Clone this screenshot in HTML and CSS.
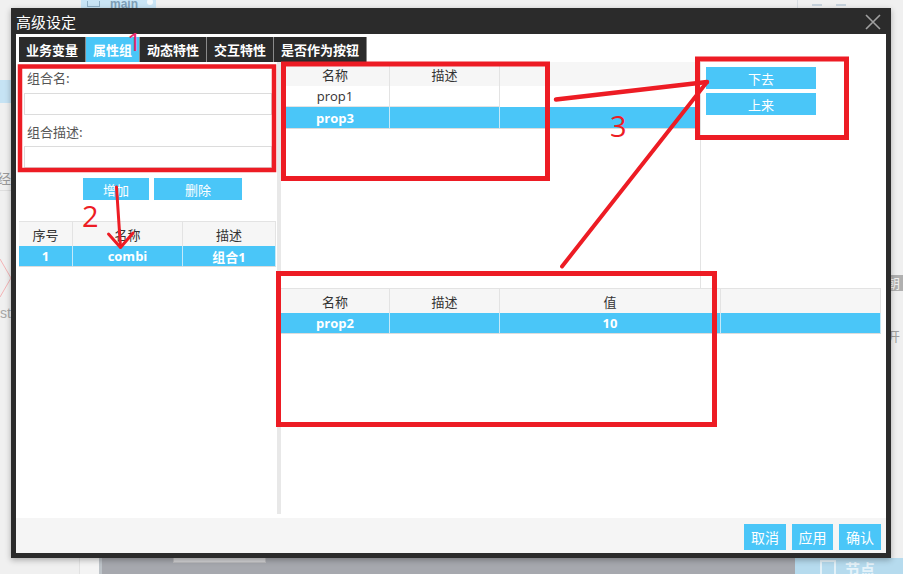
FILE: index.html
```html
<!DOCTYPE html>
<html>
<head>
<meta charset="utf-8">
<title>高级设定</title>
<link rel="stylesheet" href="styles.css">
</head>
<body>
<div class="app">
  <div class="app-top">
    <div class="main-tab"><span class="main-ico"></span><span class="main-txt">main</span><span class="main-dot"></span></div>
    <div class="top-tools"><span class="tool-line"></span><span class="tool-dash"></span><span class="tool-dash"></span></div>
  </div>
  <div class="app-left">
    <div class="sel-blue"></div>
    <div class="frag-char">经</div>
    <div class="frag-line"></div>
    <svg class="frag-diamond" width="11" height="44" viewBox="0 0 11 44"><path d="M0 2 L11 21 L0 40" fill="none" stroke="#f3b3b5" stroke-width="1"/></svg>
    <div class="frag-st">st</div>
  </div>
  <div class="app-center"></div>
  <div class="app-right">
    <div class="frag-gray">朝</div>
    <div class="frag-open">开</div>
  </div>
  <div class="app-bottom">
    <div class="bot-a"></div>
    <div class="bot-b"></div>
    <div class="bot-c"><div class="bot-c-rect"></div></div>
    <div class="bot-d"><span class="bot-ico"></span><span class="bot-txt">节点</span></div>
  </div>
</div>

<div class="dialog">
  <div class="dlg-title">
    <span class="title">高级设定</span>
    <svg class="close" width="16" height="16" viewBox="0 0 16 16"><path d="M1 1 L15 15 M15 1 L1 15" stroke="#a0a0a0" stroke-width="1.6" fill="none"/></svg>
  </div>
  <div class="dlg-body">
    <div class="tabs">
      <div class="tab w67">业务变量</div>
      <div class="tab active w54">属性组</div>
      <div class="tab w67">动态特性</div>
      <div class="tab w67">交互特性</div>
      <div class="tab w93">是否作为按钮</div>
    </div>
    <div class="content">
      <div class="left">
        <div class="lbl">组合名:</div>
        <input class="inp" type="text">
        <div class="lbl lbl2">组合描述:</div>
        <input class="inp inp2" type="text">
        <div class="btnrow">
          <div class="btn b-add">增加</div>
          <div class="btn b-del">删除</div>
        </div>
        <div class="tbl tbl-left">
          <div class="th">序号</div><div class="th">名称</div><div class="th">描述</div>
          <div class="td sel">1</div><div class="td sel">combi</div><div class="td sel">组合1</div>
        </div>
      </div>
      <div class="divider"></div>
      <div class="right">
        <div class="right-top">
          <div class="mid">
            <div class="tbl tbl-mid">
              <div class="th">名称</div><div class="th">描述</div><div class="th last"></div>
              <div class="td">prop1</div><div class="td"></div><div class="td last"></div>
              <div class="td sel tall">prop3</div><div class="td sel tall"></div><div class="td sel tall last"></div>
            </div>
          </div>
          <div class="side">
            <div class="btn b-side">下去</div>
            <div class="btn b-side">上来</div>
          </div>
        </div>
        <div class="tbl tbl-bot">
          <div class="th">名称</div><div class="th">描述</div><div class="th">值</div><div class="th"></div>
          <div class="td sel">prop2</div><div class="td sel"></div><div class="td sel">10</div><div class="td sel"></div>
        </div>
      </div>
    </div>
    <div class="footer">
      <div class="btn fb w42">取消</div>
      <div class="btn fb w41">应用</div>
      <div class="btn fb w42">确认</div>
    </div>
  </div>
</div>

<svg class="annot" width="903" height="574" viewBox="0 0 903 574">
  <g fill="none" stroke="#ed1c24" stroke-linecap="round" stroke-linejoin="round">
    <rect x="20" y="66.5" width="254" height="103.5" stroke-width="4.5" stroke-linecap="butt" stroke-linejoin="miter"/>
    <rect x="283.5" y="64" width="264" height="114.5" stroke-width="5" stroke-linecap="butt" stroke-linejoin="miter"/>
    <rect x="697.5" y="59" width="149" height="78.5" stroke-width="5" stroke-linecap="butt" stroke-linejoin="miter"/>
    <rect x="278.5" y="273.5" width="436" height="151" stroke-width="5" stroke-linecap="butt" stroke-linejoin="miter"/>
    <path d="M116.5 187 L120.5 247" stroke-width="3"/>
    <path d="M108.5 234 L120.5 247.5 L133 233" stroke-width="3"/>
    <path d="M556 99.5 L707 82" stroke-width="4.5"/>
    <path d="M562 266.5 L707 82" stroke-width="4"/>
  </g>
  <text class="ann ann2" x="82" y="227">2</text>
  <text class="ann ann3" x="610" y="137">3</text>
  <text class="ann ann1" x="127" y="51">1</text>
</svg>
</body>
</html>
```

FILE: styles.css
```css
* { box-sizing: border-box; }
html, body { margin: 0; padding: 0; }
body {
  width: 903px;
  height: 574px;
  overflow: hidden;
  position: relative;
  background: #f0f0f0;
  font-family: "Open Sans", "Noto Sans CJK SC", sans-serif;
}

/* ---------- background application ---------- */
.app {
  width: 903px;
  height: 574px;
  display: grid;
  grid-template-columns: 11px 880px 12px;
  grid-template-rows: 8px 550px 16px;
}
.app-top {
  grid-column: 1 / 4;
  grid-row: 1;
  display: flex;
  overflow: hidden;
}
.main-tab {
  margin-left: 81px;
  width: 75px;
  height: 8px;
  background: #c9e5f6;
  display: flex;
  align-items: flex-end;
  overflow: hidden;
}
.main-ico {
  width: 13px;
  height: 6px;
  margin: 0 0 1px 6px;
  border: 1px solid #8fb1c8;
  border-top: none;
}
.main-txt {
  margin-left: 10px;
  font-family: "Liberation Sans", sans-serif;
  font-size: 12px;
  line-height: 8px;
  height: 8px;
  color: #7e9fb7;
  font-weight: bold;
}
.main-dot {
  width: 6px;
  height: 6px;
  border-radius: 50%;
  background: #f4f9fc;
  margin: 0 0 3px 9px;
}
.top-tools {
  margin-left: 641px;
  display: flex;
  gap: 14px;
  align-items: flex-start;
}
.tool-line { width: 1px; height: 8px; background: #d8dde2; }
.tool-dash { width: 10px; height: 2px; margin-top: 4px; background: #c8d4de; }

.app-left {
  grid-column: 1;
  grid-row: 2;
  display: flex;
  flex-direction: column;
  overflow: hidden;
}
.sel-blue { margin-top: 72px; height: 23px; background: #c6e3f4; }
.frag-char {
  margin-top: 66px;
  margin-left: -3px;
  font-family: "Noto Sans CJK SC", sans-serif;
  font-size: 14px;
  line-height: 18px;
  color: #9a9a9a;
}
.frag-line { margin-top: 3px; height: 1px; background: #dedede; }
.frag-diamond { margin-top: 66px; display: block; }
.frag-st {
  margin-top: 4px;
  font-family: "Liberation Sans", sans-serif;
  font-size: 14px;
  line-height: 16px;
  color: #a8a8a8;
}
.app-center { grid-column: 2; grid-row: 2; }
.app-right {
  grid-column: 3;
  grid-row: 2;
  display: flex;
  flex-direction: column;
  overflow: hidden;
}
.frag-gray {
  margin-top: 267px;
  height: 16px;
  background: #b0b0b0;
  color: #f2f2f2;
  font-family: "Noto Sans CJK SC", sans-serif;
  font-size: 13px;
  line-height: 16px;
  padding-left: 0;
  text-indent: -4px;
}
.frag-open {
  margin-top: 37px;
  color: #a0a0a0;
  font-family: "Noto Sans CJK SC", sans-serif;
  font-size: 13px;
  line-height: 16px;
  text-indent: -4px;
}
.app-bottom {
  grid-column: 1 / 4;
  grid-row: 3;
  display: flex;
}
.bot-a { width: 80px; background: #f0f0f0; border-right: 1px solid #e2e2e2; }
.bot-b { width: 19px; background: #f4f4f4; }
.bot-c {
  width: 696px;
  background: #a6a8ae;
  border-left: 3px solid #bdc3c8;
}
.bot-c-rect {
  margin-left: 71px;
  width: 93px;
  height: 5px;
  background: #d3d3d5;
  border: 1px solid #bcbcbe;
  border-top: none;
}
.bot-d {
  width: 108px;
  background: #b6dbee;
  display: flex;
  align-items: flex-start;
}
.bot-ico {
  margin: 2px 0 0 25px;
  width: 16px;
  height: 14px;
  border: 2px solid #e3f1f8;
  border-bottom: none;
}
.bot-txt {
  margin-left: 9px;
  font-family: "Noto Sans CJK SC", sans-serif;
  font-size: 15px;
  line-height: 16px;
  padding-top: 3px;
  color: #e6f3fa;
  font-weight: bold;
}

/* ---------- dialog ---------- */
.dialog {
  position: absolute;
  left: 11px;
  top: 8px;
  width: 880px;
  height: 550px;
  background: #2b2b2b;
  padding: 0 5px 5px 5px;
  display: flex;
  flex-direction: column;
  box-shadow: 0 2px 6px rgba(0, 0, 0, 0.3);
}
.dlg-title {
  height: 26px;
  display: flex;
  align-items: center;
  justify-content: space-between;
}
.title {
  color: #ffffff;
  font-family: "Noto Sans CJK SC", sans-serif;
  font-size: 15px;
  line-height: 26px;
  padding-top: 1px;
}
.close { display: block; margin-right: 5px; margin-top: 1px; }
.dlg-body {
  flex: 1;
  background: #ffffff;
  display: flex;
  flex-direction: column;
}
.tabs {
  height: 28px;
  padding: 3px 0 0 3px;
  display: flex;
}
.tab {
  height: 25px;
  background: #2b2b2b;
  color: #ffffff;
  font-family: "Noto Sans CJK SC", sans-serif;
  font-size: 13px;
  font-weight: bold;
  display: flex;
  align-items: center;
  justify-content: center;
  border-right: 1px solid #8a8a8a;
}
.tab.active { background: #4ac6f8; }
.w67 { width: 67px; }
.w54 { width: 54px; }
.w93 { width: 93px; }

.content {
  height: 452px;
  display: flex;
}
.left {
  width: 261px;
  display: flex;
  flex-direction: column;
}
.lbl {
  margin: 7px 0 0 11px;
  font-family: "Noto Sans CJK SC", sans-serif;
  font-size: 13px;
  line-height: 18px;
  color: #555555;
}
.lbl2 { margin-top: 8px; }
.inp {
  display: block;
  margin: 6px 0 0 8px;
  width: 248px;
  height: 22px;
  padding: 0;
  border: 1px solid #dcdcdc;
  background: #ffffff;
  outline: none;
}
.inp2 { margin-top: 5px; }
.btnrow {
  margin: 10px 0 0 67px;
  display: flex;
  gap: 5px;
}
.btn {
  background: #4ac6f8;
  color: #ffffff;
  font-family: "Noto Sans CJK SC", sans-serif;
  font-size: 13px;
  display: flex;
  align-items: center;
  justify-content: center;
}
.b-add { width: 66px; height: 22px; }
.b-del { width: 88px; height: 22px; }

.tbl {
  display: grid;
  font-size: 13px;
}
.th {
  height: 25px;
  background: #f6f6f6;
  border-top: 1px solid #e3e3e3;
  border-right: 1px solid #e3e3e3;
  color: #333333;
  display: flex;
  align-items: center;
  justify-content: center;
  font-family: "Noto Sans CJK SC", sans-serif;
}
.td {
  height: 21px;
  color: #333333;
  display: flex;
  align-items: center;
  justify-content: center;
  border-right: 1px solid #e3e3e3;
  border-bottom: 1px solid #e3e3e3;
}
.td.sel {
  background: #4ac6f8;
  color: #ffffff;
  font-weight: bold;
  border-right: 1px solid #c4e9f9;
  border-bottom: 1px solid #dcdcdc;
}
.tbl-left {
  margin: 21px 0 0 3px;
  width: 257px;
  grid-template-columns: 54px 110px 93px;
}
.tbl-left .th { height: 25px; }

.divider { width: 4px; background: #e8e8e8; }
.right {
  width: 604px;
  display: flex;
  flex-direction: column;
}
.right-top {
  height: 226px;
  display: flex;
}
.mid { width: 419px; }
.tbl-mid {
  grid-template-columns: 109px 110px 200px;
}
.tbl-mid .th { height: 24px; border-top: none; }
.tbl-mid .th.last, .tbl-mid .td.last { border-right: none; }
.tbl-mid .td:not(.sel).last { border-bottom: none; }
.tbl-mid .td.tall { height: 22px; }
.side {
  width: 185px;
  border-left: 1px solid #e3e3e3;
  padding: 5px 0 0 5px;
  display: flex;
  flex-direction: column;
  gap: 4px;
}
.b-side { width: 110px; height: 22px; }
.tbl-bot {
  width: 600px;
  grid-template-columns: 109px 110px 221px 160px;
}
.tbl-bot .th:last-child { border-right: none; }

.footer {
  margin-top: 4px;
  height: 35px;
  background: #f5f5f5;
  display: flex;
  justify-content: flex-end;
  align-items: flex-start;
  gap: 6px;
  padding: 6px 5px 0 0;
}
.fb { height: 26px; font-size: 14px; }
.w42 { width: 42px; }
.w41 { width: 41px; }

/* ---------- annotations ---------- */
.annot {
  position: absolute;
  left: 0;
  top: 0;
  pointer-events: none;
}
.ann {
  font-family: "Open Sans", sans-serif;
  fill: #ed1c24;
}
.ann2 { font-size: 29px; }
.ann3 { font-size: 29px; }
.ann1 { font-size: 26px; fill: #e8286a; }
```
